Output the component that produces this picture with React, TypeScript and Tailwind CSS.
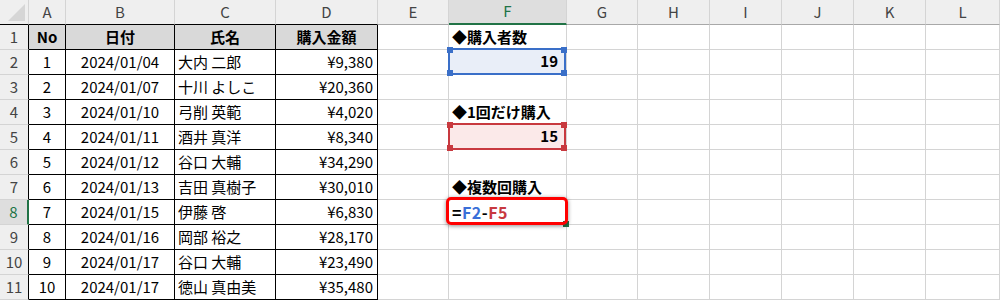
import React from 'react';

const FONT = { fontFamily: '"Noto Sans CJK JP", "Noto Sans", sans-serif' };

const cols = ['A', 'B', 'C', 'D', 'E', 'F', 'G', 'H', 'I', 'J', 'K', 'L'];

const orders = [
  [1, '2024/01/04', '大内 二郎', '¥9,380'],
  [2, '2024/01/07', '十川 よしこ', '¥20,360'],
  [3, '2024/01/10', '弓削 英範', '¥4,020'],
  [4, '2024/01/11', '酒井 真洋', '¥8,340'],
  [5, '2024/01/12', '谷口 大輔', '¥34,290'],
  [6, '2024/01/13', '吉田 真樹子', '¥30,010'],
  [7, '2024/01/15', '伊藤 啓', '¥6,830'],
  [8, '2024/01/16', '岡部 裕之', '¥28,170'],
  [9, '2024/01/17', '谷口 大輔', '¥23,490'],
  [10, '2024/01/17', '徳山 真由美', '¥35,480'],
];

// corner handles on a referenced range
function Handles({ color }: { color: string }) {
  return (
    <>
      <span className={`absolute -left-[3px] -top-[3px] h-[6px] w-[6px] ${color}`} />
      <span className={`absolute -right-[3px] -top-[3px] h-[6px] w-[6px] ${color}`} />
      <span className={`absolute -left-[3px] -bottom-[3px] h-[6px] w-[6px] ${color}`} />
      <span className={`absolute -right-[3px] -bottom-[3px] h-[6px] w-[6px] ${color}`} />
    </>
  );
}

function ColHeader({ label, inTable, active }: { label: string; inTable: boolean; active: boolean }) {
  const base = 'flex items-center justify-center border-r border-r-[#d4d4d4] text-[15px]';
  if (active) {
    return <div className={`${base} border-b-2 border-b-[#217346] bg-[#dedede] text-[#217346]`}>{label}</div>;
  }
  return (
    <div className={`${base} border-b bg-[#efefef] text-[#444] ${inTable ? 'border-b-black' : 'border-b-[#a8a8a8]'}`}>
      {label}
    </div>
  );
}

function RowHeader({ n }: { n: number }) {
  if (n === 8) {
    return (
      <div className="flex items-center justify-center border-b border-b-[#d4d4d4] border-r-2 border-r-[#217346] bg-[#dedede] text-[15px] text-[#217346]">
        {n}
      </div>
    );
  }
  return (
    <div className="flex items-center justify-center border-b border-b-[#d4d4d4] border-r border-r-black bg-[#efefef] text-[15px] text-[#444]">
      {n}
    </div>
  );
}

function TableCell({ children, head, align }: { children?: React.ReactNode; head?: boolean; align: 'center' | 'left' | 'right' }) {
  const a = align === 'center' ? 'justify-center' : align === 'right' ? 'justify-end pr-[4px]' : 'justify-start pl-[3px]';
  return (
    <div
      className={`flex items-center overflow-hidden whitespace-nowrap border-b border-r border-black text-[15px] text-black ${a} ${
        head ? 'bg-[#d9d9d9] font-bold' : 'bg-white'
      }`}
    >
      {children}
    </div>
  );
}

function GridCell({ children }: { children?: React.ReactNode }) {
  return <div className="relative border-b border-r border-[#d4d4d4] bg-white">{children}</div>;
}

function FCell({ row }: { row: number }) {
  const label = (t: string) => (
    <div className="flex h-full items-center whitespace-nowrap pl-[3px] text-[15px] font-bold text-black">{t}</div>
  );
  if (row === 1) return <GridCell>{label('◆購入者数')}</GridCell>;
  if (row === 4) return <GridCell>{label('◆1回だけ購入')}</GridCell>;
  if (row === 7) return <GridCell>{label('◆複数回購入')}</GridCell>;
  if (row === 2 || row === 5) {
    const blue = row === 2;
    return (
      <GridCell>
        <div
          className={`absolute -left-[1px] -top-[2px] right-0 -bottom-[1px] z-10 flex items-center justify-end border-2 pr-[6px] text-[15px] font-bold text-black ${
            blue ? 'border-[#3a6fc8] bg-[#e9eef8]' : 'border-[#c8393f] bg-[#fbe9e9]'
          }`}
        >
          {blue ? '19' : '15'}
          <Handles color={blue ? 'bg-[#3a6fc8]' : 'bg-[#c8393f]'} />
        </div>
      </GridCell>
    );
  }
  if (row === 8) {
    return (
      <GridCell>
        <div className="flex h-full items-center pl-[3px] text-[16px] font-semibold tracking-[0.5px]">
          <span className="text-black">=</span>
          <span className="text-[#3a6fd8]">F2</span>
          <span className="text-black">-</span>
          <span className="text-[#c8393f]">F5</span>
        </div>
        {/* fill handle of the active cell */}
        <span className="absolute -bottom-[3px] -right-[3px] z-10 h-[6px] w-[6px] bg-[#217346]" />
        {/* callout frame */}
        <span className="absolute -left-[3px] -top-[3px] -right-[2px] -bottom-[1px] z-20 rounded-[5px] border-[3px] border-[#ff0000] shadow-[0_1px_4px_rgba(0,0,0,0.45)]" />
      </GridCell>
    );
  }
  return <GridCell />;
}

export default function App() {
  return (
    <div className="h-[300px] w-[1000px] overflow-hidden bg-white" style={FONT}>
      <div className="grid grid-cols-[29px_37px_109px_101px_102px_71px_118px_71px_72px_72px_72px_72px_1fr] grid-rows-[repeat(12,25px)]">
        {/* select-all corner */}
        <div className="relative border-b border-r border-b-black border-r-[#d4d4d4] bg-[#efefef]">
          <span className="absolute bottom-[3px] right-[3px] h-[17px] w-[17px] bg-[#d6d6d6] [clip-path:polygon(100%_0,100%_100%,0_100%)]" />
        </div>
        {cols.map((c, i) => (
          <ColHeader key={c} label={c} inTable={i < 4} active={c === 'F'} />
        ))}

        {Array.from({ length: 11 }, (_, r) => {
          const row = r + 1;
          const d = row === 1 ? null : orders[row - 2];
          return (
            <React.Fragment key={row}>
              <RowHeader n={row} />
              {row === 1 ? (
                <>
                  <TableCell head align="center">No</TableCell>
                  <TableCell head align="center">日付</TableCell>
                  <TableCell head align="center">氏名</TableCell>
                  <TableCell head align="center">購入金額</TableCell>
                </>
              ) : (
                <>
                  <TableCell align="center">{d![0]}</TableCell>
                  <TableCell align="center">{d![1]}</TableCell>
                  <TableCell align="left">{d![2]}</TableCell>
                  <TableCell align="right">{d![3]}</TableCell>
                </>
              )}
              <GridCell />
              <FCell row={row} />
              <GridCell />
              <GridCell />
              <GridCell />
              <GridCell />
              <GridCell />
              <GridCell />
            </React.Fragment>
          );
        })}
      </div>
    </div>
  );
}
